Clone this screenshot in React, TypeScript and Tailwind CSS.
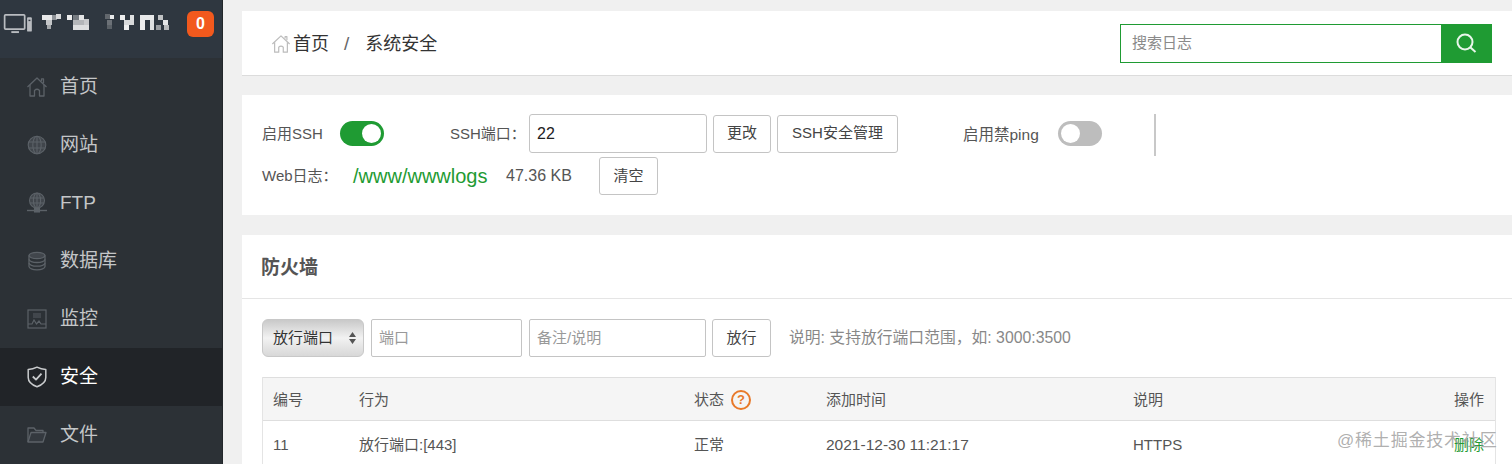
import React from "react";

const font = { fontFamily: '"Liberation Sans","Noto Sans CJK SC",sans-serif' };

const Home = ({ c = "#5c6268", s = 22 }: { c?: string; s?: number }) => (
  <svg width={s} height={s} viewBox="0 0 22 22" fill="none" stroke={c} strokeWidth="1.3" strokeLinejoin="round">
    <path d="M1.5 11 L11 2 L20.5 11" />
    <path d="M4 9 V20 H8.5 V14.5 Q11 12 13.5 14.5 V20 H18 V9" />
    <path d="M15.5 5 V2.8 H17.5 V7" />
  </svg>
);
const Globe = ({ c = "#5c6268" }: { c?: string }) => (
  <svg width="20" height="20" viewBox="0 0 20 20" fill="none" stroke={c} strokeWidth="1.1">
    <circle cx="10" cy="10" r="8.8" fill="#41464c" />
    <ellipse cx="10" cy="10" rx="4.2" ry="8.8" />
    <path d="M10 1.2V18.8M1.6 7H18.4M1.6 13H18.4" />
  </svg>
);
const FtpIcon = () => (
  <svg width="22" height="22" viewBox="0 0 22 22" fill="none" stroke="#5c6268" strokeWidth="1.1">
    <circle cx="11" cy="8.5" r="7.5" fill="#41464c" />
    <ellipse cx="11" cy="8.5" rx="3.6" ry="7.5" />
    <path d="M11 1V16M4 6H18M4 11H18" />
    <path d="M1 18.5H21" strokeWidth="1.4" />
    <rect x="8.5" y="16.5" width="5" height="3.5" fill="#5c6268" />
  </svg>
);
const Db = () => (
  <svg width="20" height="20" viewBox="0 0 20 20" fill="none" stroke="#5c6268" strokeWidth="1.3">
    <ellipse cx="10" cy="4.5" rx="8" ry="3.2" fill="#41464c" />
    <path d="M2 4.5V15.5C2 17.3 5.6 18.8 10 18.8S18 17.3 18 15.5V4.5" />
    <path d="M2 8.2C2 10 5.6 11.5 10 11.5S18 10 18 8.2M2 12C2 13.8 5.6 15.2 10 15.2S18 13.8 18 12" />
  </svg>
);
const Monitor = () => (
  <svg width="20" height="20" viewBox="0 0 20 20" fill="none" stroke="#5c6268" strokeWidth="1.2">
    <rect x="1" y="1" width="18" height="18" />
    <rect x="6" y="4" width="8" height="5" fill="#41464c" stroke="none" />
    <path d="M1 15L5 15L7 11L9.5 15L12 12L14 15H19" />
  </svg>
);
const Shield = () => (
  <svg width="20" height="22" viewBox="0 0 20 22" fill="none" stroke="#c9cbcd" strokeWidth="1.5" strokeLinejoin="round">
    <path d="M10 1.2C7 2.8 4 3.4 1.2 3.4V11.5C1.2 16 5.2 19 10 20.8C14.8 19 18.8 16 18.8 11.5V3.4C16 3.4 13 2.8 10 1.2Z" />
    <path d="M5.8 10.5L9 13.6L14.5 7.6" strokeWidth="1.8" />
  </svg>
);
const Folder = () => (
  <svg width="20" height="18" viewBox="0 0 20 18" fill="none" stroke="#5c6268" strokeWidth="1.3" strokeLinejoin="round">
    <path d="M1 16V2H7L9 4.5H16V6.5" />
    <path d="M1 16L4 6.5H19L16 16Z" fill="#34393f" />
  </svg>
);

const menu: { label: string; icon: React.ReactNode; active?: boolean }[] = [
  { label: "首页", icon: <Home /> },
  { label: "网站", icon: <Globe /> },
  { label: "FTP", icon: <FtpIcon /> },
  { label: "数据库", icon: <Db /> },
  { label: "监控", icon: <Monitor /> },
  { label: "安全", icon: <Shield />, active: true },
  { label: "文件", icon: <Folder /> },
];

const mosaic: [number, number, number, number, string][] = [
  [0, 1, 10, 5, "#e8e9ea"], [4, 6, 6, 5, "#c4c6c8"], [10, 1, 5, 5, "#8f9398"], [14, 0, 5, 5, "#d8d9da"], [5, 11, 4, 4, "#a5a8ab"],
  [25, 1, 5, 5, "#eeeeee"], [31, 1, 6, 5, "#767b81"], [37, 1, 5, 5, "#e4e5e6"], [31, 6, 11, 6, "#b4b6b9"], [31, 11, 16, 5, "#dedfe0"], [42, 5, 5, 6, "#c9cacc"],
  [65, 6, 5, 6, "#6c7177"], [65, 11, 5, 4, "#5b6167"], [63, 0, 5, 5, "#62676d"],
  [68, 1, 4, 4, "#e8e9ea"], [78, 1, 5, 5, "#eeeeee"], [88, 1, 4, 5, "#e0e1e2"], [82, 6, 10, 5, "#d8d9da"], [82, 11, 5, 5, "#eeeeee"],
  [98, 1, 14, 5, "#e8e9ea"], [98, 6, 5, 10, "#eeeeee"], [108, 6, 4, 10, "#dedfe0"], [116, 1, 5, 5, "#c0c2c4"], [121, 6, 5, 5, "#e5e6e7"], [114, 11, 5, 5, "#9a9da1"], [122, 11, 5, 5, "#b9bbbd"],
];

const Sidebar = () => (
  <aside className="w-[223px] shrink-0 bg-[#2c3136] border-r border-[#23272b]">
    <div className="h-[58px] bg-[#2f3740] flex items-start">
      <svg className="ml-[3px] mt-[13px] shrink-0" width="30" height="21" viewBox="0 0 30 22" fill="none">
        <rect x="1" y="2" width="21" height="15" rx="1" stroke="#b9bcc0" strokeWidth="1.8" />
        <path d="M8 20H16" stroke="#b9bcc0" strokeWidth="2" />
        <rect x="24.5" y="4.5" width="5" height="15" rx="1" fill="#b9bcc0" />
        <rect x="26" y="7" width="2" height="1.5" fill="#2f3740" />
      </svg>
      <svg className="ml-[9px] mt-[14px] shrink-0 blur-[0.6px]" width="128" height="16" viewBox="0 0 128 16">
        {mosaic.map(([x, y, w, h, f], i) => (
          <rect key={i} x={x} y={y} width={w} height={h} fill={f} />
        ))}
      </svg>
      <div className="ml-[17px] mt-[11px] w-[27px] h-[26px] rounded-[6px] bg-[#f2591d] text-white font-bold text-[16px] flex items-center justify-center">
        0
      </div>
    </div>
    <nav>
      {menu.map((m) => (
        <div
          key={m.label}
          className={`h-[58px] flex items-center pl-[26px] ${m.active ? "bg-[#212428] text-white" : "text-[#c4c6c8]"}`}
        >
          <span className="w-[22px] flex justify-center">{m.icon}</span>
          <span className="ml-[12px] text-[19px]">{m.label}</span>
        </div>
      ))}
    </nav>
  </aside>
);

const Btn = ({ children, w }: { children: React.ReactNode; w: string }) => (
  <button className={`${w} h-[38px] rounded-[3px] border border-[#c4c4c4] bg-white text-[#444] text-[15px] shrink-0`}>
    {children}
  </button>
);

const Toggle = ({ on }: { on?: boolean }) => (
  <div
    className={`w-[44px] h-[25px] rounded-full p-[3px] flex shrink-0 ${
      on ? "bg-[#1f9b33] justify-end" : "bg-[#bdbdbd] justify-start"
    }`}
  >
    <div className="w-[19px] h-[19px] rounded-full bg-white" />
  </div>
);

const cols = "grid grid-cols-[86px_335px_132px_307px_1fr_auto] items-center pl-[10px] pr-[11px] pt-[2px]";

export default function App() {
  return (
    <div className="w-[1512px] h-[464px] flex overflow-hidden bg-[#f0f0f0] relative" style={font}>
      <Sidebar />
      <main className="flex-1 pl-[19px] pt-[11px] min-w-0">
        <section className="h-[65px] bg-white border-b border-[#dcdcdc] flex items-center justify-between pl-[29px] pr-[20px]">
          <div className="flex items-center text-[18px] text-[#333] pt-[2px]">
            <Home c="#bcbcbc" s={20} />
            <span className="ml-[2px]">首页</span>
            <span className="ml-[15px] mr-[16px] text-[#666] text-[19px]">/</span>
            <span>系统安全</span>
          </div>
          <div className="flex h-[39px] w-[372px] border border-[#1f9b33]">
            <div className="flex-1 flex items-center pl-[11px] pt-[1px] text-[15px] text-[#8a8a8a]">搜索日志</div>
            <div className="w-[50px] bg-[#1f9b33] flex items-center justify-center">
              <svg width="22" height="22" viewBox="0 0 22 22" fill="none" stroke="#e8f6ea" strokeWidth="2">
                <circle cx="10" cy="10" r="7.5" />
                <path d="M15.5 15.5L20.5 20" />
              </svg>
            </div>
          </div>
        </section>

        <section className="mt-[19px] h-[120px] bg-white pl-[20px] pt-[19px] text-[15px] text-[#555]">
          <div className="flex items-center h-[39px]">
            <span className="w-[78px] pt-[2px]">启用SSH</span>
            <Toggle on />
            <span className="ml-[66px] w-[79px] pt-[2px]">SSH端口：</span>
            <div className="w-[178px] h-[39px] rounded-[3px] border border-[#c4c4c4] flex items-center pl-[7px] text-[#222] text-[16px]">22</div>
            <div className="ml-[6px] flex gap-[6px]">
              <Btn w="w-[58px]">更改</Btn>
              <Btn w="w-[121px]">SSH安全管理</Btn>
            </div>
            <span className="ml-[65px] w-[95px] pt-[2px] text-[15.5px]">启用禁ping</span>
            <Toggle />
            <div className="ml-[52px] w-[2px] h-[42px] bg-[#c8c8c8] self-start" />
          </div>
          <div className="flex items-center h-[38px] mt-[4px]">
            <span className="w-[91px]">Web日志：</span>
            <span className="w-[153px] text-[#1f9b33] text-[20px]">/www/wwwlogs</span>
            <span className="w-[93px] text-[16px]">47.36 KB</span>
            <Btn w="w-[59px]">清空</Btn>
          </div>
        </section>

        <section className="mt-[20px] bg-white h-[240px]">
          <div className="h-[64px] border-b border-[#e5e5e5] flex items-center pl-[19px] pt-[4px] text-[19px] font-bold text-[#555]">
            防火墙
          </div>
          <div className="pl-[20px] pr-[16px] pt-[20px]">
            <div className="flex items-center gap-[7px] h-[38px] text-[15px]">
              <div className="w-[102px] h-[38px] rounded-[6px] border border-[#c8c8c8] bg-gradient-to-b from-[#c9c9c9] via-[#f2f2f2] to-[#d8d8d8] flex items-center justify-between pl-[10px] pr-[6px] text-[#333]">
                <span>放行端口</span>
                <svg width="9" height="14" viewBox="0 0 9 14" fill="#555">
                  <path d="M4.5 1L8 6H1ZM4.5 13L1 8H8Z" />
                </svg>
              </div>
              <div className="w-[151px] h-[38px] rounded-[2px] border border-[#c4c4c4] flex items-center pl-[7px] text-[#999]">端口</div>
              <div className="w-[177px] h-[38px] rounded-[2px] border border-[#c4c4c4] flex items-center pl-[7px] text-[#999]">备注/说明</div>
              <div className="-ml-[1px]">
                <Btn w="w-[59px]">放行</Btn>
              </div>
              <span className="ml-[11px] text-[#888] text-[15.8px]">说明: 支持放行端口范围，如: 3000:3500</span>
            </div>
            <div className="mt-[20px] border-x border-[#e4e4e4] text-[15px] text-[#555]">
              <div className={`${cols} h-[44px] bg-[#f5f5f5] border-y border-[#dedede]`}>
                <span>编号</span>
                <span>行为</span>
                <span className="flex items-center gap-[7px]">
                  状态
                  <span className="w-[20px] h-[20px] rounded-full border-2 border-[#e8792a] text-[#e8792a] text-[13px] font-bold flex items-center justify-center">?</span>
                </span>
                <span>添加时间</span>
                <span>说明</span>
                <span>操作</span>
              </div>
              <div className={`${cols} h-[46px]`}>
                <span>11</span>
                <span>放行端口:[443]</span>
                <span>正常</span>
                <span className="text-[15.5px]">2021-12-30 11:21:17</span>
                <span>HTTPS</span>
                <span className="text-[#1f9b33]">删除</span>
              </div>
            </div>
          </div>
        </section>
      </main>
      <div className="absolute left-[1337px] top-[428px] text-[17px] tracking-[0.8px] text-[#9a9a9a]/80 whitespace-nowrap">
        @稀土掘金技术社区
      </div>
    </div>
  );
}
